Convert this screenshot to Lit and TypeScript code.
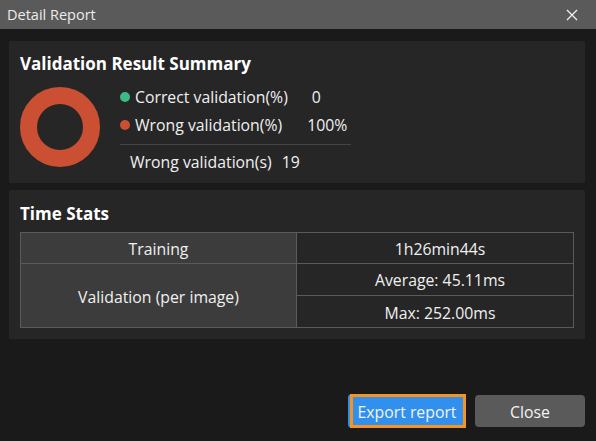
import { LitElement, html, css } from "lit";
import { customElement } from "lit/decorators.js";

@customElement("app-root")
export class AppRoot extends LitElement {
  static styles = css`
    :host {
      display: flex;
      flex-direction: column;
      width: 596px;
      height: 441px;
      background: #1a1a1a;
      color: #f0f0f0;
      font-family: "Open Sans", "Noto Sans", sans-serif;
      font-size: 15.8px;
      overflow: hidden;
    }
    .titlebar {
      height: 29px;
      flex: none;
      background: #5a5a5a;
      display: flex;
      align-items: center;
      justify-content: space-between;
      padding: 0 18px 0 7px;
      font-size: 14.5px;
      color: #ececec;
    }
    .titlebar svg { display: block; }
    .content {
      flex: 1;
      display: flex;
      flex-direction: column;
      gap: 7px;
      padding: 12px 11px 0 9px;
    }
    .panel {
      background: #262626;
      border-radius: 2px;
      padding: 0 11px;
    }
    .summary { height: 142px; }
    .stats { height: 149px; }
    h2 {
      margin: 0;
      font-size: 17px;
      font-weight: 700;
      line-height: 22px;
      color: #fff;
    }
    .summary h2 { padding-top: 12px; }
    .stats h2 { padding-top: 13px; }
    .chart {
      display: flex;
      gap: 20px;
      margin-top: 12px;
    }
    .donut { display: block; flex: none; }
    .legend { width: 231px; margin-top: -4px; }
    .row {
      display: flex;
      align-items: center;
      height: 28px;
    }
    .dot {
      width: 10px;
      height: 10px;
      border-radius: 50%;
      margin-right: 5px;
      flex: none;
    }
    .green { background: #3dba88; }
    .red { background: #cb4f33; }
    .row .val { margin-left: 24px; }
    .row .val.wide { margin-left: 25px; }
    .sep { height: 1px; background: #444; margin: 5px 0 0; }
    .count {
      display: flex;
      gap: 10px;
      padding-left: 10px;
      height: 34px;
      align-items: center;
    }
    .table {
      display: grid;
      grid-template-columns: 276px 1fr;
      grid-template-rows: repeat(3, 1fr);
      margin-top: 7px;
      border: 1px solid #5a5a5a;
      height: 96px;
      box-sizing: border-box;
    }
    .cell {
      display: flex;
      align-items: center;
      justify-content: center;
      border-right: 1px solid #5a5a5a;
      border-bottom: 1px solid #5a5a5a;
      padding-top: 2px;
      min-height: 0;
    }
    .cell.end { border-right: none; padding-left: 10px; }
    .cell.last { border-bottom: none; }
    .cell.end.last { padding-top: 3px; }
    .head { background: #3c3c3c; }
    .span { grid-row: span 2; }
    .footer {
      flex: none;
      display: flex;
      justify-content: flex-end;
      align-items: center;
      gap: 9px;
      padding: 0 11px 13px 0;
    }
    button {
      font: inherit;
      color: #f4f4f4;
      border: none;
      border-radius: 4px;
      padding: 1px 0 0;
      height: 32px;
    }
    .primary {
      width: 118px;
      height: 34px;
      background: #318fee;
      position: relative;
    }
    .primary::after {
      content: "";
      position: absolute;
      inset: 0 0 0 2px;
      border: 3px solid #f7931e;
    }
    .secondary { width: 110px; background: #5a5a5a; }
  `;

  render() {
    return html`
      <div class="titlebar">
        <span>Detail Report</span>
        <svg width="12" height="12" viewBox="0 0 12 12" fill="none" stroke="#f0f0f0" stroke-width="1.3">
          <path d="M1 1 L11 11 M11 1 L1 11"></path>
        </svg>
      </div>
      <div class="content">
        <section class="panel summary">
          <h2>Validation Result Summary</h2>
          <div class="chart">
            <svg class="donut" width="80" height="80" viewBox="0 0 80 80">
              <circle cx="40" cy="40" r="31.5" fill="none" stroke="#cb4f33" stroke-width="17"></circle>
            </svg>
            <div class="legend">
              <div class="row"><span class="dot green"></span><span>Correct validation(%)</span><span class="val">0</span></div>
              <div class="row"><span class="dot red"></span><span>Wrong validation(%)</span><span class="val wide">100%</span></div>
              <div class="sep"></div>
              <div class="count"><span>Wrong validation(s)</span><span>19</span></div>
            </div>
          </div>
        </section>
        <section class="panel stats">
          <h2>Time Stats</h2>
          <div class="table">
            <div class="cell head">Training</div>
            <div class="cell end">1h26min44s</div>
            <div class="cell head span last">Validation (per image)</div>
            <div class="cell end">Average: 45.11ms</div>
            <div class="cell end last">Max: 252.00ms</div>
          </div>
        </section>
      </div>
      <div class="footer">
        <button class="primary">Export report</button>
        <button class="secondary">Close</button>
      </div>
    `;
  }
}
